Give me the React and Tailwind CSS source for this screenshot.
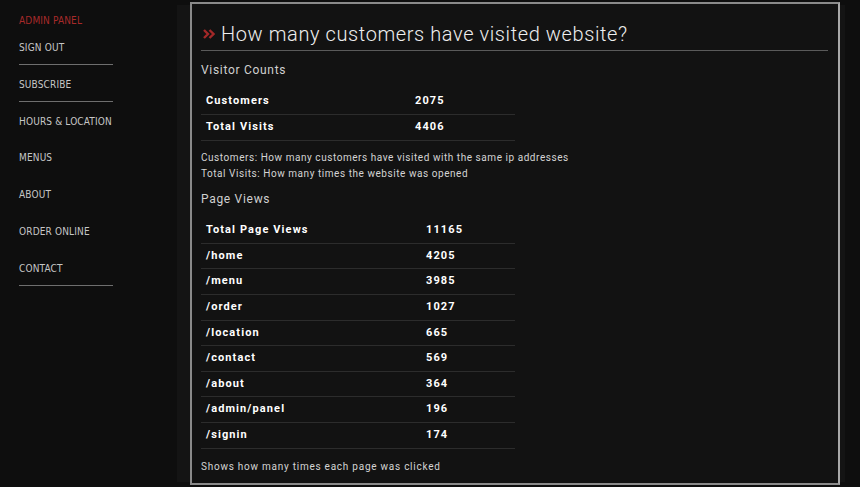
import React from "react";

const nav = [
  { label: "SIGN OUT", line: true },
  { label: "SUBSCRIBE", line: true },
  { label: "HOURS & LOCATION", line: false },
  { label: "MENUS", line: false },
  { label: "ABOUT", line: false },
  { label: "ORDER ONLINE", line: false },
  { label: "CONTACT", line: true },
];

const visitors = [
  ["Customers", "2075"],
  ["Total Visits", "4406"],
];

const pages = [
  ["Total Page Views", "11165"],
  ["/home", "4205"],
  ["/menu", "3985"],
  ["/order", "1027"],
  ["/location", "665"],
  ["/contact", "569"],
  ["/about", "364"],
  ["/admin/panel", "196"],
  ["/signin", "174"],
];

function Table({ rows, col, rowH }) {
  return (
    <div className="w-[314px]">
      {rows.map(([k, v]) => (
        <div
          key={k}
          className={`flex items-center border-b border-[#2c2c2c] text-[11px] font-bold tracking-[1.1px] text-white ${rowH}`}
        >
          <div className={`${col} pl-[5px]`}>{k}</div>
          <div className="pl-[5px]">{v}</div>
        </div>
      ))}
    </div>
  );
}

export default function App() {
  return (
    <div
      className="flex h-[487px] w-[860px] overflow-hidden bg-[#0e0e0e]"
      style={{ fontFamily: "Roboto, 'Noto Sans', sans-serif" }}
    >
      <aside
        className="w-[177px] shrink-0 pl-[19px] pt-[13px] uppercase text-[10px] tracking-[0.15px] text-[#c6c6c6]"
        style={{ fontFamily: "'Liberation Sans Narrow', 'DejaVu Sans Condensed', 'DejaVu Sans Mono', monospace" }}
      >
        <div className="h-[15px] leading-[15px] text-[#a82a2a]">ADMIN PANEL</div>
        {nav.map((n) => (
          <div
            key={n.label}
            className={`w-[94px] whitespace-nowrap h-[36.8px] pt-[13px] leading-[14px] border-b ${
              n.line ? "border-[#6e6e6e]" : "border-transparent"
            }`}
          >
            {n.label}
          </div>
        ))}
      </aside>

      <div className="my-[5px] w-[668px] shrink-0 bg-[#141414] pl-[13px] pr-[5px]">
        <div className="-my-[3px] h-[483px] w-[650px] border-2 border-[#8a8a8a] border-r-[#a8a8a8] bg-[#121212] pl-[9px] pr-[10px]">
          <div className="flex items-center border-b border-[#5a5a5a] pt-[14px] h-[47px] leading-[32px]">
            <svg width="12" height="10" viewBox="0 0 12 10" className="ml-[2px] mr-[6px] shrink-0">
              <path d="M1 1 L5 5 L1 9" fill="none" stroke="#a32828" strokeWidth="2.4" />
              <path d="M6.5 1 L10.5 5 L6.5 9" fill="none" stroke="#a32828" strokeWidth="2.4" />
            </svg>
            <span className="text-[20px] tracking-[0.6px] text-[#eeeeee] font-light">
              How many customers have visited website?
            </span>
          </div>

          <div className="mt-[10px] text-[12px] leading-[18px] tracking-[0.7px] text-[#d0d0d0]">
            Visitor Counts
          </div>

          <div className="mt-[10px]">
            <Table rows={visitors} col="w-[209px]" rowH="h-[26px]" />
          </div>

          <div className="mt-[9px] text-[10px] leading-[16px] tracking-[0.55px] text-[#d4d4d4]">
            <div>Customers: How many customers have visited with the same ip addresses</div>
            <div>Total Visits: How many times the website was opened</div>
          </div>

          <div className="mt-[8px] text-[12px] leading-[18px] tracking-[0.7px] text-[#d0d0d0]">
            Page Views
          </div>

          <div className="mt-[10px]">
            <Table rows={pages} col="w-[220px]" rowH="h-[25.625px]" />
          </div>

          <div className="mt-[10px] text-[10px] leading-[16px] tracking-[0.75px] text-[#d4d4d4]">
            Shows how many times each page was clicked
          </div>
        </div>
      </div>
    </div>
  );
}
